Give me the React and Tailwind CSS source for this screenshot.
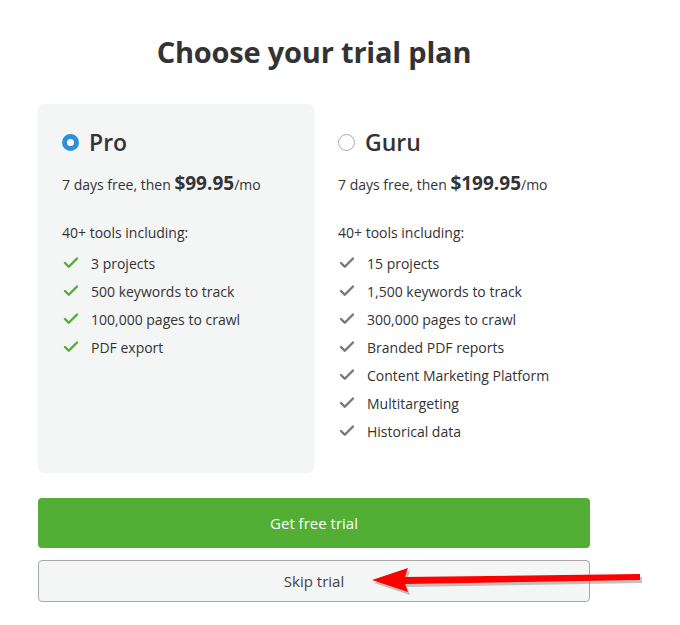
import { Check } from "lucide-react";

const pro = ["3 projects", "500 keywords to track", "100,000 pages to crawl", "PDF export"];
const guru = [
    "15 projects",
    "1,500 keywords to track",
    "300,000 pages to crawl",
    "Branded PDF reports",
    "Content Marketing Platform",
    "Multitargeting",
    "Historical data",
];

function Plan({ name, price, items, selected }) {
    return (
        <div className={`flex-1 rounded-md px-6 pt-[23px] pb-6 ${selected ? "bg-[#f4f5f5]" : ""}`}>
            <div className="flex items-center gap-[10px] h-[30px]">
                {selected ? (
                    <span className="w-[17px] h-[17px] rounded-full bg-[#2f8fdd] flex items-center justify-center">
                        <span className="w-[7px] h-[7px] rounded-full bg-white" />
                    </span>
                ) : (
                    <span className="w-[17px] h-[17px] rounded-full border border-[#aaa] bg-white" />
                )}
                <span className="text-[23px] font-semibold text-[#333]">{name}</span>
            </div>
            <p className="mt-[12px] text-[14px] text-[#333] h-[26px] flex items-baseline">
                7 days free, then&nbsp;<b className="text-[19px] font-bold">{price}</b>/mo
            </p>
            <p className="mt-[27px] text-[14px] text-[#333]">40+ tools including:</p>
            <ul className="mt-[6px]">
                {items.map(item => (
                    <li key={item} className="flex items-center h-[28px] text-[14px] text-[#333]">
                        <Check
                            size={18}
                            strokeWidth={3.2}
                            className={`mr-[11px] ${selected ? "text-[#52ae34]" : "text-[#777]"}`}
                        />
                        {item}
                    </li>
                ))}
            </ul>
        </div>
    );
}

export default function App() {
    return (
        <div className="relative w-[680px] h-[625px] bg-white font-['Open_Sans',sans-serif]">
            <div className="ml-[38px] w-[552px] pt-[30px]">
                <h1 className="text-center text-[29px] font-bold text-[#333] leading-[44px] tracking-[-0.2px]">
                    Choose your trial plan
                </h1>
                <div className="flex mt-[30px] h-[369px]">
                    <Plan name="Pro" price="$99.95" items={pro} selected />
                    <Plan name="Guru" price="$199.95" items={guru} />
                </div>
                <button className="mt-[25px] w-full h-[50px] rounded-[4px] bg-[#52ae34] text-white text-[15px]">
                    Get free trial
                </button>
                <button className="mt-[12px] w-full h-[42px] rounded-[4px] bg-[#f4f5f5] border border-[#a9a9a9] text-[#444] text-[15px]">
                    Skip trial
                </button>
            </div>
            <svg className="absolute left-[360px] top-[560px]" width="300" height="45" viewBox="0 0 300 45">
                <g fill="#999" opacity="0.6" transform="translate(2,3)">
                    <polygon points="12,20 48,8 45,17 280,14 280,20 45,24 48,32" />
                </g>
                <polygon fill="#f00" points="12,20 48,8 45,17 280,14 280,20 45,24 48,32" />
            </svg>
        </div>
    );
}
